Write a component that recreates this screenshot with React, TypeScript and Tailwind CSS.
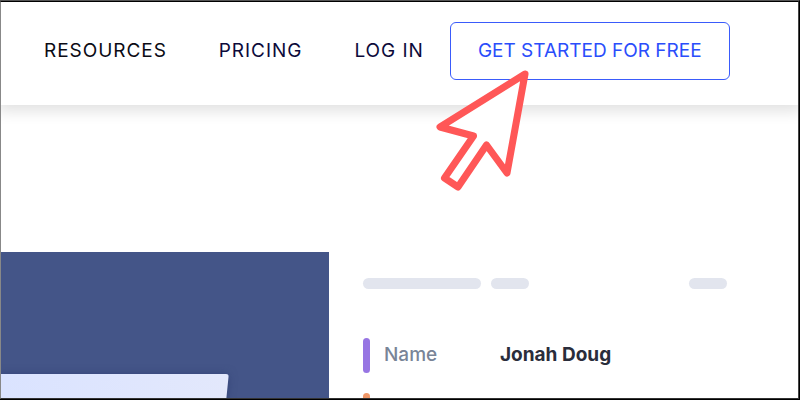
import type { ReactNode } from "react";

function NavLink({ children, color }: { children: ReactNode; color: string }) {
  return (
    <a href="#" className={`whitespace-nowrap ${color}`}>
      {children}
    </a>
  );
}

function Header() {
  return (
    <header className="relative flex h-[103px] shrink-0 items-start bg-white pt-5 pl-[43px] text-[19px] leading-7 shadow-[0_2px_14px_4px_rgba(0,0,0,0.12)]">
      <nav className="flex h-[58px] items-center gap-[52px] tracking-wider">
        <NavLink color="text-[#0b0b14]">RESOURCES</NavLink>
        <NavLink color="text-[#0c0a3a]">PRICING</NavLink>
        <NavLink color="text-[#0c0a3a]">LOG IN</NavLink>
      </nav>
      <div className="relative ml-[26px]">
        <button
          type="button"
          className="h-[58px] w-[280px] rounded-md border border-[#3a5bfb] bg-white whitespace-nowrap text-[#2a4dfb]"
        >
          GET STARTED FOR FREE
        </button>
        <Pointer />
      </div>
    </header>
  );
}

function Pointer() {
  return (
    <svg
      aria-hidden="true"
      viewBox="0 0 100 124"
      className="pointer-events-none absolute top-[45px] left-[-16px] h-[124px] w-[100px]"
    >
      <path
        d="M91 7 6 60 39.500 69 10.500 111 24 120 52.500 78 73 106Z"
        fill="white"
        stroke="#ff5757"
        strokeWidth="7"
        strokeLinejoin="round"
      />
    </svg>
  );
}

function Illustration() {
  return (
    <div className="w-[328px] shrink-0 bg-[#445588] pt-[120px]">
      <svg aria-hidden="true" viewBox="0 0 328 30" className="block h-[30px] w-full overflow-visible">
        <defs>
          <linearGradient id="sheet" x1="0" x2="1">
            <stop offset="0" stopColor="#dae3ff" />
            <stop offset="1" stopColor="#e3e8fc" />
          </linearGradient>
        </defs>
        <path
          d="M-2 2H225Q228 2 227.500 5L225 30H-2Z"
          fill="url(#sheet)"
          className="drop-shadow-[0_0_4px_rgba(35,50,105,0.5)]"
        />
      </svg>
    </div>
  );
}

function Details() {
  return (
    <section className="flex grow flex-col pt-[26px] pl-[34px]">
      <div className="flex w-[364px] items-center">
        <span className="h-[11px] w-[118px] rounded-full bg-[#e2e5ee]" />
        <span className="ml-[10px] h-[11px] w-[38px] rounded-full bg-[#e2e5ee]" />
        <span className="ml-auto h-[11px] w-[38px] rounded-full bg-[#e2e5ee]" />
      </div>
      <dl className="mt-12 flex items-center text-[19px] leading-9">
        <span className="h-[35px] w-[7px] rounded-full bg-[#9775e3]" />
        <dt className="ml-[14px] w-[116px] font-medium text-[#788497]">Name</dt>
        <dd className="font-bold text-[#2a2d3b]">Jonah Doug</dd>
      </dl>
      <span className="mt-5 h-[35px] w-[7px] shrink-0 rounded-full bg-[#ef9768]" />
    </section>
  );
}

export default function App() {
  return (
    <div className="h-screen overflow-hidden border-t border-r border-b border-t-[#555] border-r-black border-b-black bg-white font-['Inter',sans-serif]">
      <div className="flex h-full flex-col overflow-hidden border border-t-black border-r-[#444] border-b-[#333] border-l-[#888]">
        <Header />
        <main className="mt-[147px] flex min-h-0 grow">
          <Illustration />
          <Details />
        </main>
      </div>
    </div>
  );
}
